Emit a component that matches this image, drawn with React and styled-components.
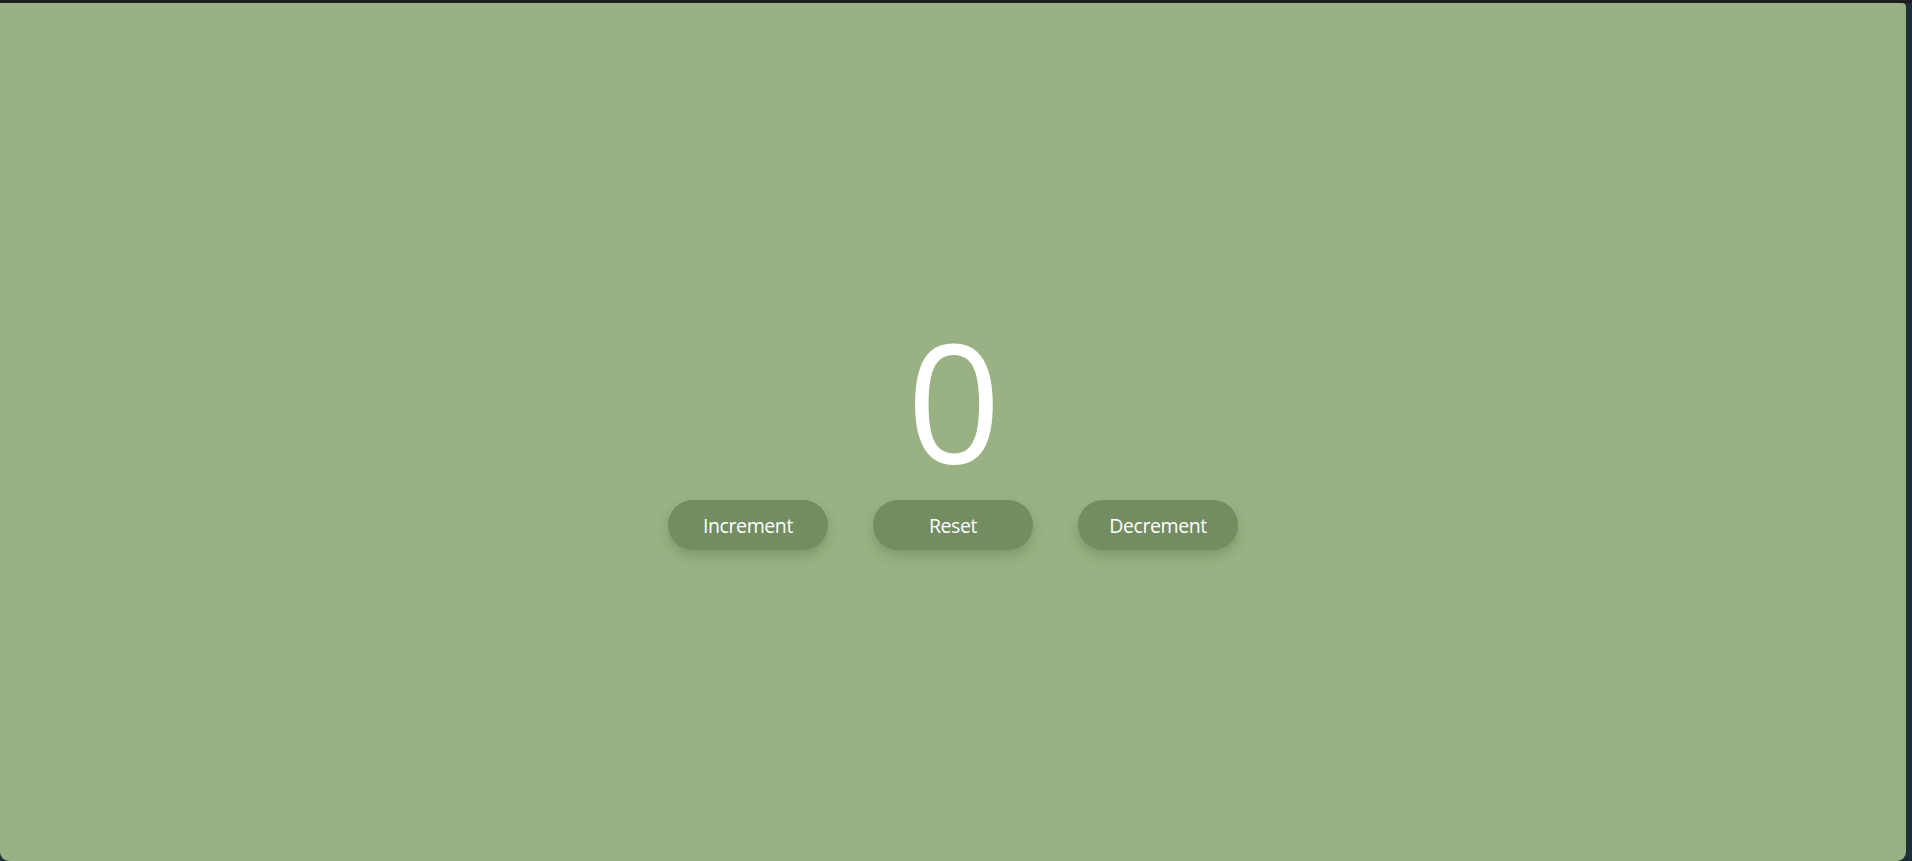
import React, { useState } from 'react';
import styled, { createGlobalStyle } from 'styled-components';

const GlobalStyle = createGlobalStyle`
    * {
        box-sizing: border-box;
    }
    html, body {
        margin: 0;
        padding: 0;
        height: 100%;
        overflow: hidden;
    }
    body {
        background: #1f2f38;
        font-family: "Open Sans", "Noto Sans", sans-serif;
    }
`

const Frame = styled.div`
    height: 100vh;
    border-top: 3px solid #1f1f20;
    padding-right: 6px;
    display: flex;
`

const Page = styled.main`
    flex: 1;
    background: #9ab283;
    border-radius: 0 4px 9px 9px;
    display: flex;
    flex-direction: column;
    align-items: center;
    justify-content: center;
    padding-top: 3px;
`

const Count = styled.h1`
    margin: 0;
    color: #ffffff;
    font-size: 165px;
    font-weight: 400;
    line-height: 1;
    letter-spacing: -2px;
`

const ButtonRow = styled.div`
    display: flex;
    gap: 45px;
    margin-top: 18px;
`

const CounterButton = styled.button`
    width: 160px;
    height: 50px;
    border: none;
    border-radius: 25px;
    background: #738c62;
    color: #ffffff;
    font-family: "Open Sans", "Noto Sans", sans-serif;
    font-size: 19.5px;
    letter-spacing: -0.4px;
    cursor: pointer;
    box-shadow: 0 6px 12px rgba(40, 60, 30, 0.22);
`

const App = () => {
    const [count, setCount] = useState(0);

    return (
        <>
        <GlobalStyle />
        <Frame>
            <Page>
                <Count>{count}</Count>
                <ButtonRow>
                    <CounterButton onClick={() => setCount(count + 1)}>Increment</CounterButton>
                    <CounterButton onClick={() => setCount(0)}>Reset</CounterButton>
                    <CounterButton onClick={() => setCount(count - 1)}>Decrement</CounterButton>
                </ButtonRow>
            </Page>
        </Frame>
        </>
    );
};

export default App;
